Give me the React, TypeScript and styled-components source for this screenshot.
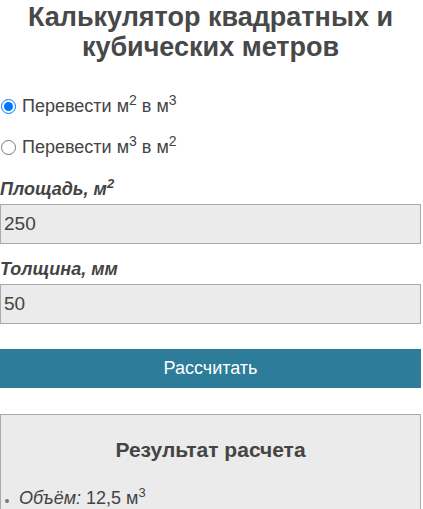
import React, { useState } from 'react'
import styled, { createGlobalStyle } from 'styled-components'

const GlobalStyle = createGlobalStyle`
    body {
        margin: 0;
        background: #fff;
        font-family: "Liberation Sans", Arial, sans-serif;
        color: #444;
    }
`

const App: React.FC = () => {
    const [mode, setMode] = useState('sq')
    const [area, setArea] = useState('250')
    const [thick, setThick] = useState('50')

    return (
        <Page>
            <GlobalStyle />
            <Title>Калькулятор квадратных и кубических метров</Title>
            <Modes>
                <Option>
                    <Radio type="radio" name="mode" checked={mode === 'sq'} onChange={() => setMode('sq')} />
                    <span>Перевести м<sup>2</sup> в м<sup>3</sup></span>
                </Option>
                <Option>
                    <Radio type="radio" name="mode" checked={mode === 'cu'} onChange={() => setMode('cu')} />
                    <span>Перевести м<sup>3</sup> в м<sup>2</sup></span>
                </Option>
            </Modes>
            <Fields>
                <Field>
                    <Label>Площадь, м<sup>2</sup></Label>
                    <Input value={area} onChange={e => setArea(e.target.value)} />
                </Field>
                <Field>
                    <Label>Толщина, мм</Label>
                    <Input value={thick} onChange={e => setThick(e.target.value)} />
                </Field>
            </Fields>
            <Button>Рассчитать</Button>
            <Result>
                <ResultTitle>Результат расчета</ResultTitle>
                <List>
                    <Item><em>Объём:</em> <Value>12,5 м<sup>3</sup></Value></Item>
                </List>
            </Result>
        </Page>
    )
}

export default App

const Page = styled.div`
    width: 421px;
    display: flex;
    flex-direction: column;
`

const Title = styled.h1`
    margin: 2px 10px 0;
    font-size: 27px;
    line-height: 30px;
    font-weight: bold;
    text-align: center;
    color: #484848;
`

const Modes = styled.div`
    margin-top: 33px;
    display: flex;
    flex-direction: column;
    gap: 19px;
`

const Option = styled.label`
    display: flex;
    align-items: center;
    height: 22px;
    font-size: 18px;
    color: #444;

    sup {
        font-size: 14px;
        line-height: 0;
        vertical-align: 7px;
    }
`

const Radio = styled.input`
    margin: 0 6px 0 1px;
    width: 15px;
    height: 15px;
`

const Fields = styled.div`
    margin-top: 20px;
    display: flex;
    flex-direction: column;
    gap: 14px;
`

const Field = styled.div`
    display: flex;
    flex-direction: column;
`

const Label = styled.div`
    font-size: 18px;
    font-weight: bold;
    font-style: italic;
    line-height: 22px;
    margin-bottom: 4px;
    color: #444;

    sup {
        font-size: 13px;
        line-height: 0;
    }
`

const Input = styled.input`
    box-sizing: border-box;
    width: 100%;
    height: 40px;
    margin: 0;
    padding: 0 3px;
    border: 1px solid #aaa;
    background: #ebebeb;
    font-family: "Liberation Sans", Arial, sans-serif;
    font-size: 19px;
    color: #444;
    outline: none;
`

const Button = styled.button`
    margin-top: 25px;
    height: 39px;
    width: 100%;
    border: none;
    background: #2d7c9a;
    color: #fff;
    font-family: "Liberation Sans", Arial, sans-serif;
    font-size: 18px;
    cursor: pointer;
`

const Result = styled.div`
    margin-top: 26px;
    border: 1px solid #aaa;
    background: #ebebeb;
    padding: 22px 0 10px;
`

const ResultTitle = styled.h2`
    margin: 0 0 24px;
    font-size: 21px;
    line-height: 26px;
    font-weight: bold;
    text-align: center;
    color: #444;
`

const List = styled.ul`
    margin: 0;
    padding: 0 0 0 18px;
    list-style: disc outside;
`

const Item = styled.li`
    font-size: 18px;
    line-height: 22px;

    &::marker {
        font-size: 12px;
        color: #777;
    }

    em {
        font-style: italic;
    }

    sup {
        font-size: 13px;
        line-height: 0;
    }
`

const Value = styled.span`
    font-size: 18px;
`
